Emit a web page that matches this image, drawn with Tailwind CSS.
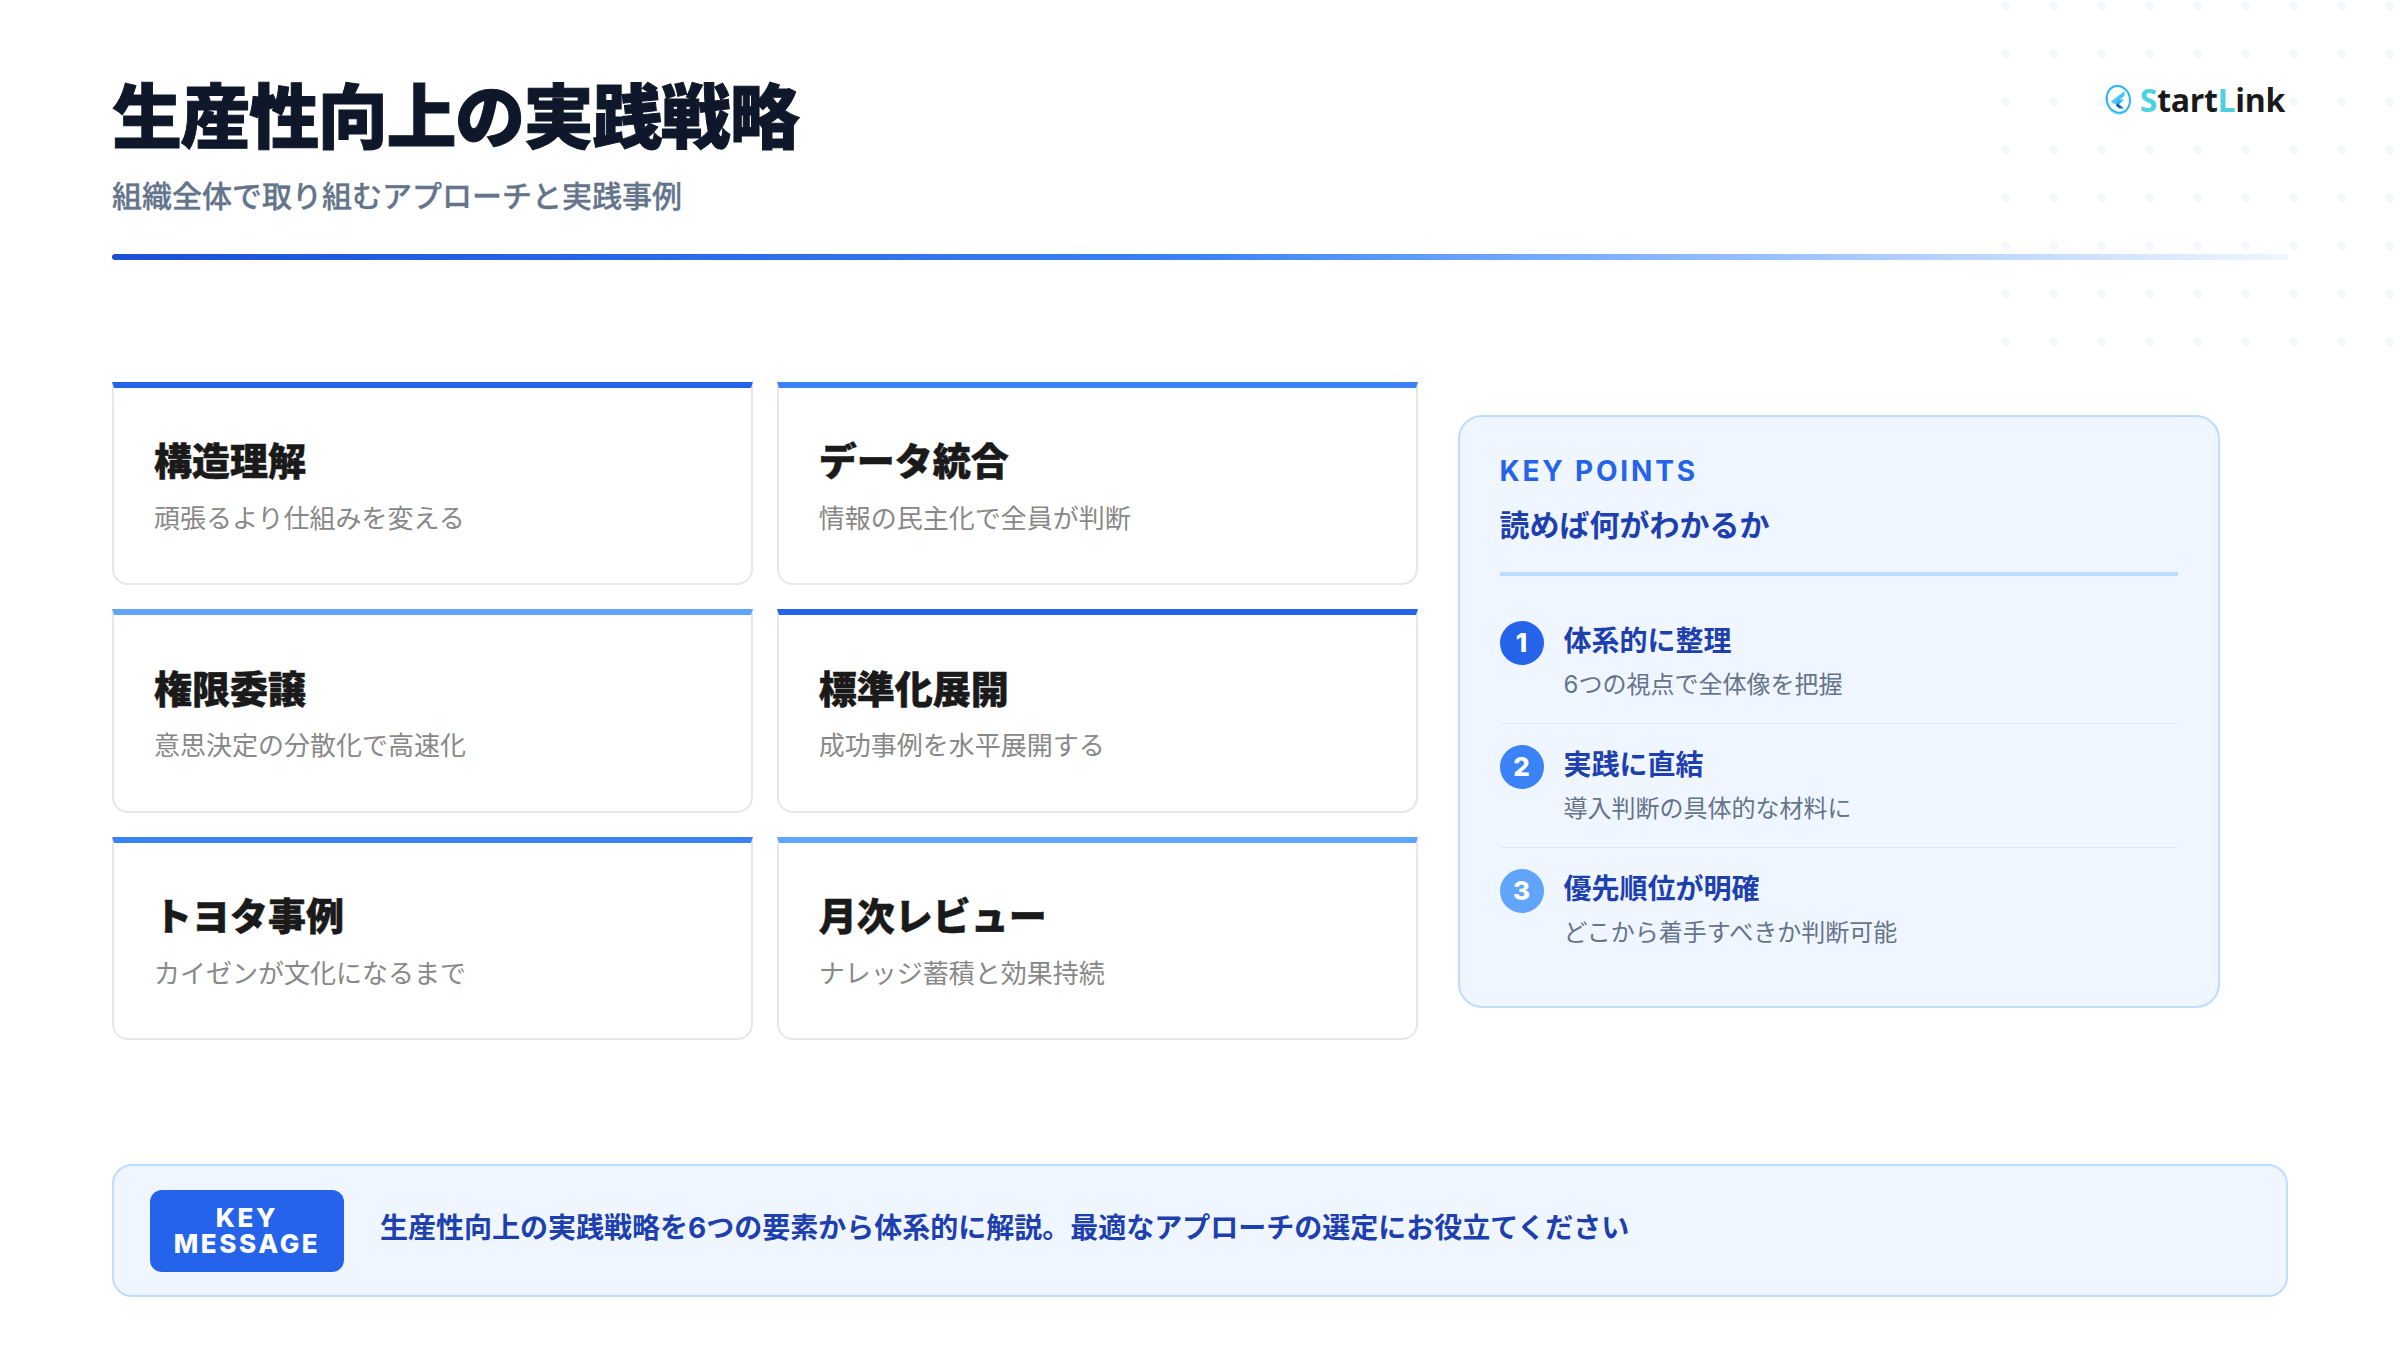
<!DOCTYPE html>
<html lang="ja">
<head>
    <meta charset="UTF-8">
    <title>生産性向上の実践戦略</title>
    <script src="https://cdn.jsdelivr.net/npm/@tailwindcss/browser@4"></script>
</head>
<body class="bg-white font-[Inter,'Noto_Sans_CJK_JP',sans-serif]">
<div class="relative w-[2400px] h-[1350px] overflow-hidden flex flex-col px-[112px] pt-[72px] pb-[53px]">

    <!-- dots -->
    <div class="absolute top-0 right-0 w-[400px] h-[350px] bg-[radial-gradient(circle_at_6px_6px,#f5f7ff_4px,transparent_4.5px)] bg-[length:48px_48px]"></div>

    <!-- header -->
    <header class="relative">
        <div class="flex justify-between items-start">
            <div>
                <h1 class="text-[70px] leading-[1.3] font-black tracking-[-0.02em] text-[#0f172a] [-webkit-text-stroke:1px_#0f172a]">生産性向上の実践戦略</h1>
                <p class="mt-[12px] text-[30px] leading-[1.4] font-medium text-[#64748b] [-webkit-text-stroke:0.3px_#64748b]">組織全体で取り組むアプローチと実践事例</p>
            </div>
            <div class="flex items-center gap-[8px] mt-[12px] mr-[3px]">
                <svg class="w-[28px] h-[32px]" viewBox="0 0 28 32" fill="none">
                    <ellipse cx="14" cy="16" rx="12" ry="15" transform="rotate(-14 14 16)" stroke="#a5e6fb" stroke-width="0.8"/>
                    <ellipse cx="14.5" cy="15.5" rx="11.5" ry="13.5" transform="rotate(-14 14 16)" stroke="#29b6f6" stroke-width="2"/>
                    <path d="M20.5 7L7 17.5l3 2.5 10.5-8z" fill="#4fc3f7"/>
                    <path d="M20 15.5h-5l-4 4 2.5 2.5z" fill="#29b6f6"/>
                    <path d="M14 19.5l6 5h-4.500l-4-3z" fill="#1565c0"/>
                </svg>
                <div class="font-['Open_Sans',sans-serif] font-bold text-[32px] tracking-[-0.01em] leading-none text-[#1a1a1a]"><span class="text-[#4dd0e1]">S</span>tart<span class="text-[#4dd0e1]">L</span>ink</div>
            </div>
        </div>
        <div class="mt-[37px] h-[6px] rounded-full bg-gradient-to-r from-[#1d4ed8] via-[#3b82f6] to-[#eff6ff]"></div>
    </header>

    <!-- main -->
    <main class="relative flex-1 flex items-center gap-[40px] pb-[2px]">
        <div class="w-[1305.6px] shrink-0 grid grid-cols-2 gap-[24px]">
            <div class="h-[203.500px] bg-white border-2 border-t-[6px] border-[#e5e7eb] border-t-[#2563eb] rounded-b-2xl px-[40px] pt-[3px] flex flex-col justify-center">
                <h3 class="text-[38px] leading-[1.3] font-black text-[#1a1a1a] [-webkit-text-stroke:0.5px_#1a1a1a]">構造理解</h3>
                <p class="mt-[14px] text-[26px] leading-[1.4] text-[#888888]">頑張るより仕組みを変える</p>
            </div>
            <div class="h-[203.500px] bg-white border-2 border-t-[6px] border-[#e5e7eb] border-t-[#3b82f6] rounded-b-2xl px-[40px] pt-[3px] flex flex-col justify-center">
                <h3 class="text-[38px] leading-[1.3] font-black text-[#1a1a1a] [-webkit-text-stroke:0.5px_#1a1a1a]">データ統合</h3>
                <p class="mt-[14px] text-[26px] leading-[1.4] text-[#888888]">情報の民主化で全員が判断</p>
            </div>
            <div class="h-[203.500px] bg-white border-2 border-t-[6px] border-[#e5e7eb] border-t-[#60a5fa] rounded-b-2xl px-[40px] pt-[3px] flex flex-col justify-center">
                <h3 class="text-[38px] leading-[1.3] font-black text-[#1a1a1a] [-webkit-text-stroke:0.5px_#1a1a1a]">権限委譲</h3>
                <p class="mt-[14px] text-[26px] leading-[1.4] text-[#888888]">意思決定の分散化で高速化</p>
            </div>
            <div class="h-[203.500px] bg-white border-2 border-t-[6px] border-[#e5e7eb] border-t-[#2563eb] rounded-b-2xl px-[40px] pt-[3px] flex flex-col justify-center">
                <h3 class="text-[38px] leading-[1.3] font-black text-[#1a1a1a] [-webkit-text-stroke:0.5px_#1a1a1a]">標準化展開</h3>
                <p class="mt-[14px] text-[26px] leading-[1.4] text-[#888888]">成功事例を水平展開する</p>
            </div>
            <div class="h-[203.500px] bg-white border-2 border-t-[6px] border-[#e5e7eb] border-t-[#3b82f6] rounded-b-2xl px-[40px] pt-[3px] flex flex-col justify-center">
                <h3 class="text-[38px] leading-[1.3] font-black text-[#1a1a1a] [-webkit-text-stroke:0.5px_#1a1a1a]">トヨタ事例</h3>
                <p class="mt-[14px] text-[26px] leading-[1.4] text-[#888888]">カイゼンが文化になるまで</p>
            </div>
            <div class="h-[203.500px] bg-white border-2 border-t-[6px] border-[#e5e7eb] border-t-[#60a5fa] rounded-b-2xl px-[40px] pt-[3px] flex flex-col justify-center">
                <h3 class="text-[38px] leading-[1.3] font-black text-[#1a1a1a] [-webkit-text-stroke:0.5px_#1a1a1a]">月次レビュー</h3>
                <p class="mt-[14px] text-[26px] leading-[1.4] text-[#888888]">ナレッジ蓄積と効果持続</p>
            </div>
        </div>

        <aside class="w-[762px] h-[593px] bg-[#eff6ff] border-2 border-[#bfdbfe] rounded-3xl px-[40px] pt-[36px]">
            <div class="text-[28px] leading-[1.3] font-bold tracking-[0.1em] text-[#2563eb]">KEY POINTS</div>
            <div class="mt-[15px] text-[30px] leading-[1.4] font-bold text-[#1e40af]">読めば何がわかるか</div>
            <div class="mt-[26px] h-[4px] bg-[#bfdbfe]"></div>
            <div class="mt-[46px]">
                <div class="flex gap-[20px] h-[102px] border-b border-[#dbeafe]">
                    <div class="w-[44px] h-[44px] mt-[-1px] rounded-full bg-[#2563eb] text-white text-[26px] font-extrabold flex items-center justify-center">1</div>
                    <div>
                        <div class="text-[28px] leading-[1.4] font-bold text-[#1e40af]">体系的に整理</div>
                        <div class="mt-[7px] text-[24px] leading-[1.4] text-[#64748b]">6つの視点で全体像を把握</div>
                    </div>
                </div>
                <div class="flex gap-[20px] h-[124px] border-b border-[#dbeafe] pt-[22px]">
                    <div class="w-[44px] h-[44px] mt-[-1px] rounded-full bg-[#3b82f6] text-white text-[26px] font-extrabold flex items-center justify-center">2</div>
                    <div>
                        <div class="text-[28px] leading-[1.4] font-bold text-[#1e40af]">実践に直結</div>
                        <div class="mt-[7px] text-[24px] leading-[1.4] text-[#64748b]">導入判断の具体的な材料に</div>
                    </div>
                </div>
                <div class="flex gap-[20px] h-[124px] pt-[22px]">
                    <div class="w-[44px] h-[44px] mt-[-1px] rounded-full bg-[#60a5fa] text-white text-[26px] font-extrabold flex items-center justify-center">3</div>
                    <div>
                        <div class="text-[28px] leading-[1.4] font-bold text-[#1e40af]">優先順位が明確</div>
                        <div class="mt-[7px] text-[24px] leading-[1.4] text-[#64748b]">どこから着手すべきか判断可能</div>
                    </div>
                </div>
            </div>
        </aside>
    </main>

    <!-- footer -->
    <footer class="relative h-[133px] bg-[#eff6ff] border-2 border-[#bfdbfe] rounded-[20px] px-[36px] flex items-center gap-[36px]">
        <div class="w-[194px] h-[82px] shrink-0 rounded-xl bg-[#2563eb] text-white text-[26px] leading-[26px] font-extrabold tracking-[0.1em] text-center flex items-center justify-center">KEY<br>MESSAGE</div>
        <p class="pb-[6px] text-[28px] font-bold text-[#1e40af]">生産性向上の実践戦略を6つの要素から体系的に解説。最適なアプローチの選定にお役立てください</p>
    </footer>
</div>
</body>
</html>
